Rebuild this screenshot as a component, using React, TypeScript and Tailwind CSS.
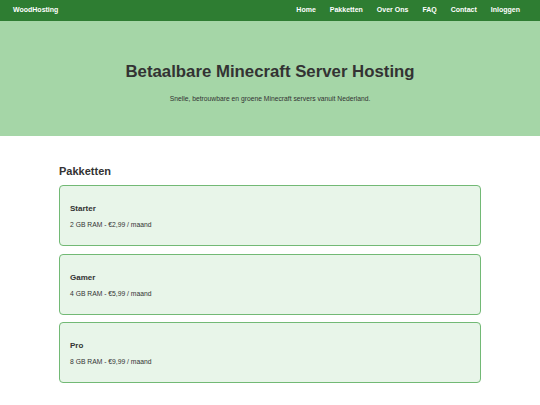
import React from "react";

const plans = [
  { name: "Starter", desc: "2 GB RAM - €2,99 / maand" },
  { name: "Gamer", desc: "4 GB RAM - €5,99 / maand" },
  { name: "Pro", desc: "8 GB RAM - €9,99 / maand" },
];

export default function App() {
  return (
    <div className="min-h-[405px] bg-white text-[#333] [font-family:'Liberation_Sans',Arial,sans-serif]">
      <nav className="flex h-[21px] items-center justify-between bg-[#2e7d32] pl-[13px] pr-[20px] text-white">
        <div className="text-[7px] font-bold">WoodHosting</div>
        <div className="flex gap-[14px] text-[7px] font-bold">
          <span>Home</span>
          <span>Pakketten</span>
          <span>Over Ons</span>
          <span>FAQ</span>
          <span>Contact</span>
          <span>Inloggen</span>
        </div>
      </nav>
      <header className="flex h-[115px] flex-col items-center bg-[#a5d6a7] pt-[40px]">
        <h1 className="text-[16.8px] font-bold leading-[22px]">Betaalbare Minecraft Server Hosting</h1>
        <p className="mt-[11px] text-[6.75px] leading-[9px]">Snelle, betrouwbare en groene Minecraft servers vanuit Nederland.</p>
      </header>
      <main className="mx-auto w-[422px] pt-[28px]">
        <h2 className="text-[11px] font-bold leading-[14px]">Pakketten</h2>
        <div className="mt-[7px] flex flex-col gap-[7.5px]">
          {plans.map((p) => (
            <div key={p.name} className="h-[61px] rounded-[4px] border border-[#72b975] bg-[#e8f5e9] px-[10px] pt-[18px]">
              <div className="text-[8px] font-bold leading-[10px]">{p.name}</div>
              <div className="mt-[7px] text-[6.75px] leading-[8px]">{p.desc}</div>
            </div>
          ))}
        </div>
      </main>
    </div>
  );
}
